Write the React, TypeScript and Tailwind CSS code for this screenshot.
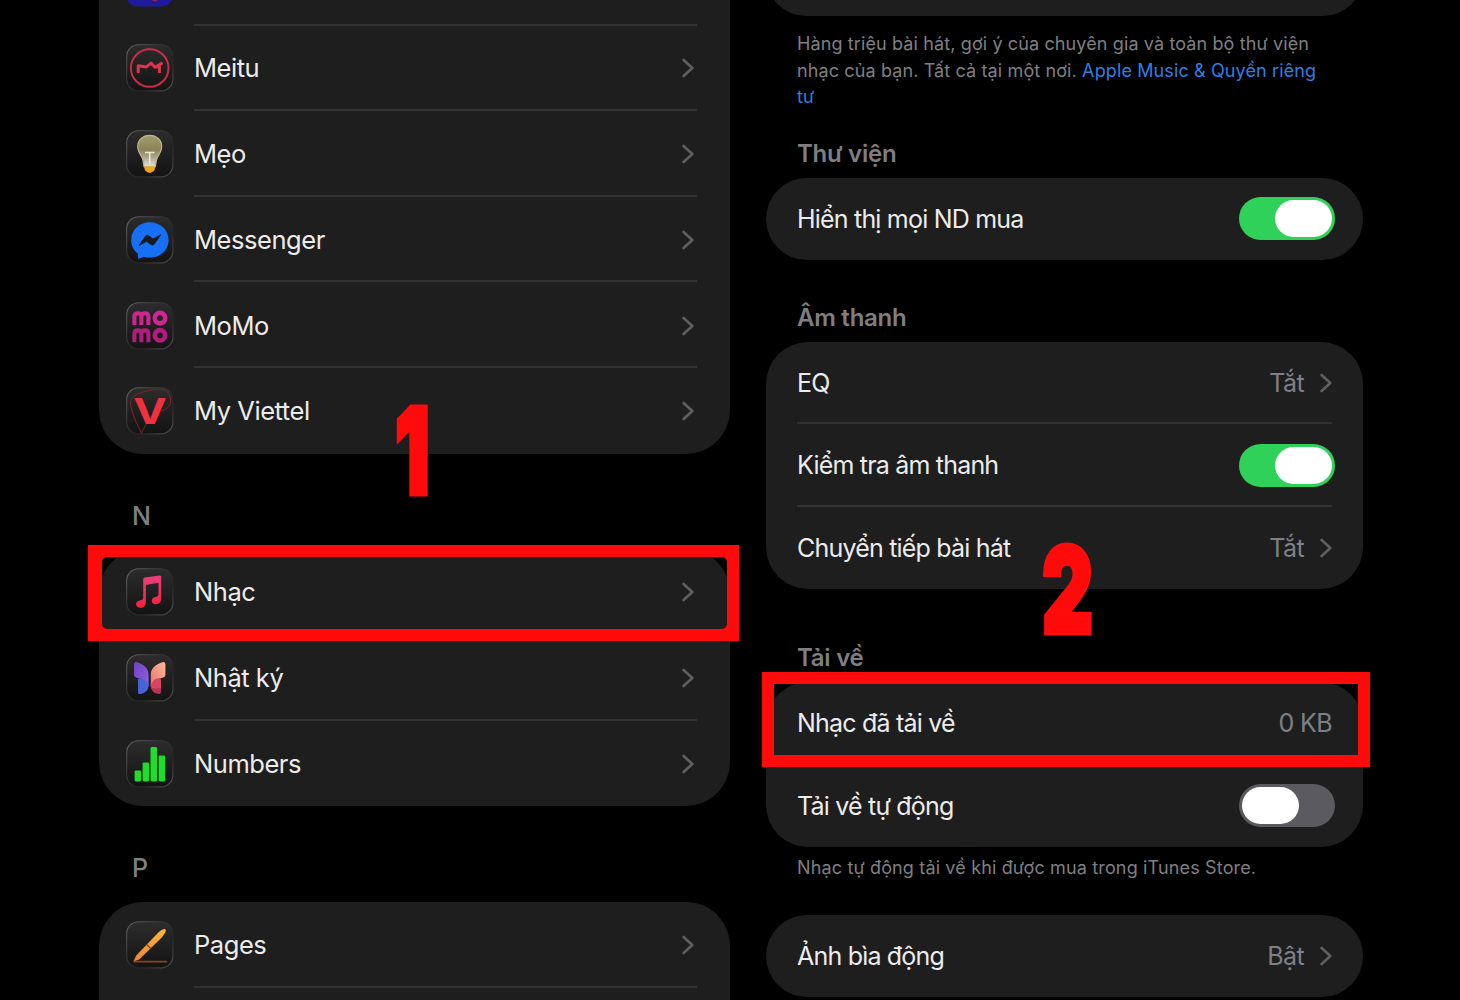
import type { ReactNode } from "react";

type AppRow = {
  name: string;
  icon: ReactNode;
};

function Chevron() {
  return (
    <svg width="12" height="20" viewBox="0 0 12 20" fill="none" aria-hidden className="shrink-0">
      <path
        d="M1.6 2 L10.3 10 L1.6 18"
        stroke="#5f5f63"
        strokeWidth="2.6"
        strokeLinecap="round"
        strokeLinejoin="round"
      />
    </svg>
  );
}

// Dark glass tile shared by every app icon, drawn on a 48x48 grid.
function Tile({ id, children }: { id: string; children: ReactNode }) {
  return (
    <svg width="48" height="48" viewBox="0 0 48 48" aria-hidden className="block shrink-0">
      <defs>
        <linearGradient id={`${id}-bg`} x1="0" y1="0" x2="0" y2="1">
          <stop offset="0" stopColor="#2c2c2c" />
          <stop offset="1" stopColor="#131313" />
        </linearGradient>
        <linearGradient id={`${id}-edge`} x1="0" y1="0" x2="1" y2="1">
          <stop offset="0" stopColor="#666" />
          <stop offset="0.35" stopColor="#3a3a3a" />
          <stop offset="0.65" stopColor="#252525" />
          <stop offset="1" stopColor="#555" />
        </linearGradient>
      </defs>
      <rect
        x="0.7"
        y="0.7"
        width="46.2"
        height="46.2"
        rx="12"
        fill={`url(#${id}-bg)`}
        stroke={`url(#${id}-edge)`}
        strokeWidth="1.1"
      />
      {children}
    </svg>
  );
}

const meitu = (
  <Tile id="meitu">
    <circle cx="23.7" cy="24" r="18.8" fill="none" stroke="#cb2c4b" strokeWidth="2" />
    <path
      d="M12.2 29 V21.8 L20.5 23 L25 19 L29 23.2 L36.5 18.7 M29 23.2 L33.4 22 V29"
      fill="none"
      stroke="#e0334f"
      strokeWidth="3"
      strokeLinejoin="round"
    />
  </Tile>
);

const tips = (
  <Tile id="tips">
    <defs>
      <linearGradient id="bulb" x1="0" y1="0" x2="0" y2="1">
        <stop offset="0" stopColor="#a39c6c" />
        <stop offset="0.45" stopColor="#8b8458" />
        <stop offset="0.7" stopColor="#aaa68d" />
        <stop offset="1" stopColor="#e4e2dc" />
      </linearGradient>
    </defs>
    <path
      d="M23.7 5.3 C30.6 5.3 35.7 10.2 35.7 16.6 C35.7 21.4 32.8 24.6 31 28.3 C30 31 29.8 33.5 29.4 36.6 H18 C17.6 33.5 17.4 31 16.4 28.3 C14.6 24.6 11.7 21.4 11.7 16.6 C11.7 10.2 16.8 5.3 23.7 5.3 Z"
      fill="url(#bulb)"
      stroke="#bdb68c"
      strokeWidth="1.2"
    />
    <path d="M19 22.5 H28.4 M23.7 22.5 V34" stroke="#ece9d8" strokeWidth="1.6" />
    <path d="M18 36.5 H29.4 L28.4 40.6 Q26 43 23.7 43 Q21.4 43 19 40.6 Z" fill="#f0a51e" />
  </Tile>
);

const messenger = (
  <Tile id="messenger">
    <path
      d="M23.8 6.2 C34.6 6.2 42.6 14 42.6 24 C42.6 34.2 34.4 41.6 23.8 41.6 C21.6 41.6 19.7 41.3 17.9 40.7 L12.2 43 L11.8 37.6 C7.4 34.3 5.2 29.6 5.2 24 C5.2 14 13 6.2 23.8 6.2 Z"
      fill="#1670f6"
    />
    <path
      d="M13 29.6 L19.3 20.3 Q20.7 18.3 22.7 19.8 L27 23 L34.8 18.7 L28.4 28 Q26.9 30 25 28.6 L20.6 25.3 Z"
      fill="#191b20"
      stroke="#191b20"
      strokeWidth="0.8"
      strokeLinejoin="round"
    />
  </Tile>
);

// One line of the stacked logo: three posts under twin arches, then a ring.
function MomoLine({ y, color }: { y: number; color: string }) {
  return (
    <g transform={`translate(0 ${y})`} fill="none" stroke={color} strokeWidth="4.1">
      <path d="M8.4 14.2 V5.6 Q8.4 2.4 12 2.4 Q15.4 2.4 15.4 5.6 V14.2 M15.4 5.6 Q15.4 2.4 18.9 2.4 Q22.4 2.4 22.4 5.6 V14.2" />
      <circle cx="34" cy="7.3" r="5.2" strokeWidth="4.6" />
    </g>
  );
}

const momo = (
  <Tile id="momo">
    <MomoLine y={8.8} color="#cd2691" />
    <MomoLine y={26} color="#b31b7c" />
  </Tile>
);

const viettel = (
  <Tile id="viettel">
    <path
      d="M15.5 46 C10 35 5 25 4.5 16 C4.3 9 15 4 30 2.4 C39 1.6 43.8 4 44.6 13 C45 21 38 23.5 31 25 C25 27 20 37 15.5 46 Z"
      fill="none"
      stroke="#8b2229"
      strokeWidth="0.9"
    />
    <text
      x="7.3"
      y="36.9"
      fontFamily="Inter, sans-serif"
      fontWeight="700"
      fontSize="35.5"
      textLength="33.5"
      lengthAdjust="spacingAndGlyphs"
      fill="#f0303c"
    >
      V
    </text>
  </Tile>
);

const music = (
  <Tile id="music">
    <defs>
      <linearGradient id="note" x1="0" y1="0" x2="0" y2="1">
        <stop offset="0" stopColor="#e8407e" />
        <stop offset="1" stopColor="#f5203c" />
      </linearGradient>
    </defs>
    <path
      d="M17.2 11.4 Q17.2 9.9 18.7 9.6 L33.4 7.4 Q35.2 7.2 35.2 8.8 V30.6 C35.2 34.4 32.6 36.3 29.8 36.3 C27.4 36.3 25.8 34.8 25.8 32.7 C25.8 30.4 27.4 29.2 30.2 28.7 Q32.5 28.3 32.5 26.6 V14.8 L19.9 17 V34 C19.9 37.9 17.2 39.8 14.2 39.8 C11.8 39.8 10.1 38.3 10.1 36.2 C10.1 33.9 11.8 32.7 14.7 32.2 Q17.2 31.8 17.2 29.9 Z"
      fill="url(#note)"
    />
  </Tile>
);

const journal = (
  <Tile id="journal">
    <defs>
      <linearGradient id="wing-l" x1="0" y1="0" x2="1" y2="1">
        <stop offset="0" stopColor="#7440c4" />
        <stop offset="1" stopColor="#8b62e0" />
      </linearGradient>
      <linearGradient id="wing-r" x1="0" y1="1" x2="1" y2="0">
        <stop offset="0" stopColor="#e8746a" />
        <stop offset="1" stopColor="#ffb79b" />
      </linearGradient>
    </defs>
    <path d="M12 24.5 Q17.5 26 22.6 29 V31 Q22 39 14 40 Q12 40.2 12 38 Z" fill="#3558c8" />
    <path d="M8 10.5 Q8 7.2 11 8.2 C19 10.5 22.6 15 22.6 21 V32 C20 25.5 15 24.8 10 23.4 Q8 22.8 8 21 Z" fill="url(#wing-l)" />
    <path d="M12 26 C15 22.8 20.5 25 22.6 32 C21 38.5 17 39.7 12.6 40 Z" fill="#4664d8" />
    <path d="M35 24.5 Q29.5 26 24.6 29 V32 Q25.2 39 33 40 Q35 40.2 35 38 Z" fill="#b93355" />
    <path d="M39.4 10.5 Q39.4 7.2 36.4 8.2 C28.4 10.5 24.8 15 24.8 21 V32 C27.4 25.5 32.4 24.8 37.4 23.4 Q39.4 22.8 39.4 21 Z" fill="url(#wing-r)" />
    <path d="M35 26 C32 22.8 26.8 25 24.8 32 C26 35 30 34.5 35 34 Z" fill="#d84562" />
  </Tile>
);

const numbers = (
  <Tile id="numbers">
    <g fill="#20dd2c">
      <rect x="8.6" y="30.4" width="6.6" height="11" rx="1.4" />
      <rect x="16.6" y="22.4" width="6.6" height="19" rx="1.4" />
      <rect x="24.5" y="7" width="6.6" height="34.4" rx="1.4" />
      <rect x="32.6" y="15.6" width="6.6" height="25.8" rx="1.4" />
    </g>
  </Tile>
);

const pages = (
  <Tile id="pages">
    <defs>
      <linearGradient id="pen" x1="0" y1="1" x2="1" y2="0">
        <stop offset="0" stopColor="#ee8430" />
        <stop offset="1" stopColor="#fdb63c" />
      </linearGradient>
    </defs>
    <path d="M8 40.6 H40.5" stroke="#87441c" strokeWidth="1.6" strokeLinecap="round" />
    <path
      d="M7.6 40.2 L10.2 34.4 L32.6 11.2 Q38 6.8 39.6 8.5 Q40.8 10.2 36 16.2 L13.2 38.4 Z"
      fill="url(#pen)"
    />
    <path d="M20.6 23.4 L24.4 27.2" stroke="#7b3e16" strokeWidth="1.3" />
  </Tile>
);

const M_APPS: AppRow[] = [
  { name: "Meitu", icon: meitu },
  { name: "Mẹo", icon: tips },
  { name: "Messenger", icon: messenger },
  { name: "MoMo", icon: momo },
  { name: "My Viettel", icon: viettel },
];

const N_APPS: AppRow[] = [
  { name: "Nhạc", icon: music },
  { name: "Nhật ký", icon: journal },
  { name: "Numbers", icon: numbers },
];

function AppList({ apps }: { apps: AppRow[] }) {
  return (
    <ul>
      {apps.map((app, i) => (
        <li key={app.name} className="flex h-[85.75px] items-center pl-[27px] pt-px">
          {app.icon}
          <div
            className={`ml-5 mr-[33px] flex h-full flex-1 items-center justify-between border-b-2 pr-[3px] pt-[2px] ${
              i === apps.length - 1 ? "border-transparent" : "border-[#323234]"
            }`}
          >
            <span className="text-[25.5px] leading-8 tracking-[-0.45px] text-[#ececec]">{app.name}</span>
            <Chevron />
          </div>
        </li>
      ))}
    </ul>
  );
}

function Toggle({ on }: { on: boolean }) {
  return (
    <span
      role="switch"
      aria-checked={on}
      className={`-mr-[3px] flex h-[43px] w-[96px] items-center rounded-full px-[3px] ${
        on ? "justify-end bg-[#30d158]" : "justify-start bg-[#5a5a5f]"
      }`}
    >
      <span className="h-[37px] w-[57px] rounded-full bg-white" />
    </span>
  );
}

function Value({ text, chevron = true }: { text: string; chevron?: boolean }) {
  return (
    <span className="flex items-center gap-[16px] tracking-[-0.6px] text-[#808084]">
      {text}
      {chevron && <Chevron />}
    </span>
  );
}

function SettingRow({ label, line, children }: { label: string; line?: boolean; children: ReactNode }) {
  return (
    <div
      className={`mx-[31px] flex h-[82.5px] items-center justify-between border-b-2 pt-px text-[25px] leading-8 ${
        line ? "border-[#323234]" : "border-transparent"
      }`}
    >
      <span className="tracking-[-0.8px] text-[#ececec]">{label}</span>
      {children}
    </div>
  );
}

function SectionTitle({ children }: { children: ReactNode }) {
  return (
    <h2 className="pl-[31px] text-[24px] font-semibold leading-8 tracking-[-0.25px] text-[#7f7f83]">{children}</h2>
  );
}

export default function App() {
  return (
    <main className="relative flex h-[1000px] w-[1460px] overflow-hidden bg-black font-['Inter','Noto_Sans',sans-serif]">
      <section className="ml-[99px] w-[631px] shrink-0">
        <div className="h-[453.5px] overflow-hidden rounded-b-[44px] bg-[#1e1e1e]">
          <div className="flex h-[24px] items-start pl-[28px]">
            <svg width="46" height="8" viewBox="0 0 46 8" aria-hidden>
              <path d="M0 0 H45 Q42 6.5 34 6.5 H11 Q3 6.5 0 0 Z" fill="#1d1b9c" />
              <path d="M24 0 H31 L28 1.6 Z" fill="#a5203f" />
            </svg>
          </div>
          <div className="ml-[95px] mr-[33px] -mb-px h-[2px] bg-[#323234]" />
          <AppList apps={M_APPS} />
        </div>

        <h2 className="mt-[46px] pl-[33px] text-[25px] font-medium leading-8 text-[#7f7f83]">N</h2>
        <div className="mt-[17.5px] h-[257px] rounded-[44px] bg-[#1e1e1e]">
          <AppList apps={N_APPS} />
        </div>

        <h2 className="mt-[46px] pl-[33px] text-[25px] font-medium leading-8 text-[#7f7f83]">P</h2>
        <div className="mt-[18px] h-[130px] rounded-t-[44px] bg-[#1e1e1e]">
          <AppList apps={[{ name: "Pages", icon: pages }]} />
          <div className="ml-[95px] mr-[33px] -mt-[2px] h-[2px] bg-[#323234]" />
        </div>
      </section>

      <section className="ml-[36px] w-[597px] shrink-0">
        <div className="h-[16px] overflow-hidden">
          <div className="-mt-[64px] h-[80px] rounded-[40px] bg-[#1e1e1e]" />
        </div>
        <p className="mt-[15px] whitespace-nowrap pl-[31px] text-[18px] leading-[26.6px] tracking-[0.12px] text-[#7f7f83]">
          Hàng triệu bài hát, gợi ý của chuyên gia và toàn bộ thư viện
          <br />
          nhạc của bạn. Tất cả tại một nơi.{" "}
          <a className="text-[#2f7fe0]">
            Apple Music &amp; Quyền riêng
            <br />
            tư
          </a>
        </p>

        <div className="mt-[27px]">
          <SectionTitle>Thư viện</SectionTitle>
          <div className="mt-[8px] rounded-[41px] bg-[#1e1e1e]">
            <SettingRow label="Hiển thị mọi ND mua">
              <Toggle on />
            </SettingRow>
          </div>
        </div>

        <div className="mt-[41.5px]">
          <SectionTitle>Âm thanh</SectionTitle>
          <div className="mt-[8px] rounded-[42px] bg-[#1e1e1e]">
            <SettingRow label="EQ" line>
              <Value text="Tắt" />
            </SettingRow>
            <SettingRow label="Kiểm tra âm thanh" line>
              <Toggle on />
            </SettingRow>
            <SettingRow label="Chuyển tiếp bài hát">
              <Value text="Tắt" />
            </SettingRow>
          </div>
        </div>

        <div className="mt-[53px]">
          <SectionTitle>Tải về</SectionTitle>
          <div className="mt-[8px] rounded-[42px] bg-[#1e1e1e]">
            <SettingRow label="Nhạc đã tải về">
              <Value text="0 KB" chevron={false} />
            </SettingRow>
            <SettingRow label="Tải về tự động">
              <Toggle on={false} />
            </SettingRow>
          </div>
          <p className="mt-[8px] whitespace-nowrap pl-[31px] text-[18px] leading-[26px] tracking-[0.15px] text-[#7f7f83]">
            Nhạc tự động tải về khi được mua trong iTunes Store.
          </p>
        </div>

        <div className="mt-[33.5px] rounded-[41px] bg-[#1e1e1e]">
          <SettingRow label="Ảnh bìa động">
            <Value text="Bật" />
          </SettingRow>
        </div>
      </section>

      {/* Step markers drawn over both panels. The left frame is square
          outside and rounded inside, hence the two stacked borders. */}
      <div className="absolute left-[88px] top-[545px] h-[96px] w-[651px] border-[12px] border-l-[14px] border-[#ff0b0b]">
        <div className="absolute -inset-[3px] rounded-[8px] border-[3px] border-[#ff0b0b]" />
      </div>
      <div className="absolute left-[762px] top-[672px] h-[95px] w-[608px] border-[12px] border-[#ff0b0b]" />
      <span className="absolute left-[395px] top-[391px] origin-left scale-x-[0.64] text-[120px] font-black leading-none text-[#ff0b0b] [-webkit-text-stroke:5px_#ff0b0b]">
        1
      </span>
      <span className="absolute left-[1042px] top-[530px] origin-left scale-x-[0.66] text-[120px] font-black leading-none text-[#ff0b0b] [-webkit-text-stroke:5px_#ff0b0b]">
        2
      </span>
    </main>
  );
}
